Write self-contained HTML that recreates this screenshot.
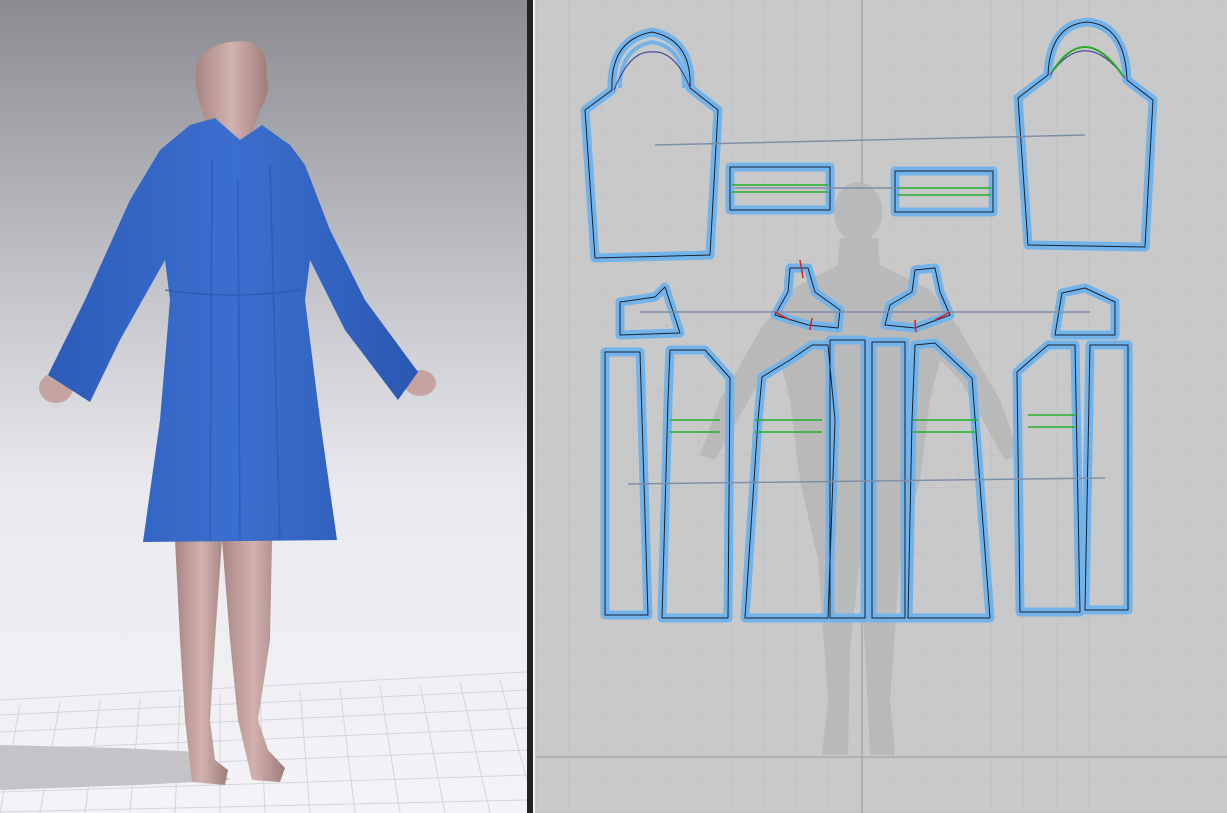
<!DOCTYPE html>
<html><head><style>
html,body{margin:0;padding:0;width:1227px;height:813px;overflow:hidden;background:#c8c8c8}
svg{display:block}
</style></head><body>
<svg width="1227" height="813" viewBox="0 0 1227 813" xmlns="http://www.w3.org/2000/svg">
<defs>
<linearGradient id="lg" x1="0" y1="0" x2="0" y2="1">
<stop offset="0" stop-color="#8b8c91"/>
<stop offset="0.35" stop-color="#c3c4c9"/>
<stop offset="0.6" stop-color="#e9e9ee"/>
<stop offset="1" stop-color="#f4f4f8"/>
</linearGradient>
<pattern id="grid" x="536" y="0" width="32.5" height="32.5" patternUnits="userSpaceOnUse">
<path d="M0 0H32.5M0 0V32.5" stroke="#c0c0c0" stroke-width="1" fill="none"/>
</pattern>
<linearGradient id="skin" x1="0" x2="1"><stop offset="0" stop-color="#a88583"/><stop offset="0.5" stop-color="#d2b2ae"/><stop offset="1" stop-color="#9e7c7a"/></linearGradient>
<linearGradient id="coat" x1="0" x2="1"><stop offset="0" stop-color="#2c5cb8"/><stop offset="0.5" stop-color="#3b6fcf"/><stop offset="1" stop-color="#2a58b2"/></linearGradient>
</defs>
<rect x="0" y="0" width="528" height="813" fill="url(#lg)"/>
<g stroke="#d4d4da" stroke-width="1">
<path d="M0 700L527 672M0 715L527 690M0 732L527 708M0 750L527 728M0 770L527 750M0 792L527 775M0 812L527 800"/>
<path d="M20 705L0 813M60 702L40 813M100 700L85 813M140 698L130 813M180 696L175 813M220 694L220 813M260 692L265 813M300 690L310 813M340 688L355 813M380 686L400 813M420 684L445 813M460 682L490 813M500 680L527 780"/>
</g>
<path d="M0 745L120 748L200 752L230 780L140 785L0 790Z" fill="#c4c4c8"/>
<path d="M175 540L222 540L215 640L210 720L215 760L228 770L225 785L192 782L185 720L180 640Z" fill="url(#skin)"/>
<path d="M222 540L272 540L270 640L258 720L268 750L285 768L280 782L252 780L238 720L230 640Z" fill="url(#skin)"/>
<path d="M198 60Q215 38 250 42Q270 50 266 75Q272 90 260 110L250 140L212 140L200 105Q192 80 198 60Z" fill="url(#skin)"/>
<ellipse cx="56" cy="388" rx="17" ry="15" fill="#c5a3a0"/>
<ellipse cx="420" cy="383" rx="16" ry="13" fill="#c5a3a0"/>
<path d="M190 125L215 118L240 140L262 125L290 145L305 165L330 230L365 300L418 372L398 400L345 330L310 260L305 300L320 420L337 540L143 542L160 420L170 300L165 260L120 340L90 402L48 375L85 300L130 200L160 150Z" fill="url(#coat)"/>
<g stroke="#2a56ad" stroke-width="1.5" fill="none" opacity="0.7">
<path d="M212 160L210 540M270 165L280 540M238 180L240 540M165 290Q230 300 300 290"/>
</g>
<rect x="527" y="0" width="6" height="813" fill="#222"/>
<rect x="533" y="0" width="2" height="813" fill="#f4f4f4"/>
<rect x="535" y="0" width="692" height="813" fill="#c9c9c9"/>
<rect x="535" y="0" width="692" height="813" fill="url(#grid)"/>
<path d="M862 0V813M535 757H1227" stroke="#aaaaaa" stroke-width="1.5"/>
<g fill="#b9b9b9">
<ellipse cx="858" cy="212" rx="24" ry="30"/>
<path d="M840 238L878 238L880 265L930 290L960 330L1000 400L1020 455L1005 460L960 380L940 360L930 400L920 480L900 560L890 700L895 755L870 755L865 650L860 560L850 650L848 755L822 755L828 700L818 560L800 480L790 400L780 360L760 380L715 460L700 455L720 400L760 330L790 290L838 265Z"/>
</g>
<g fill="none" stroke="#72b3ea" stroke-width="9" stroke-linejoin="round">
<path d="M612 90Q610 40 652 32Q692 40 690 88L718 110L710 255L595 258L585 110Z"/>
<path d="M620 88Q620 48 652 42Q685 48 684 88" stroke-width="4"/>
<rect x="730" y="167" width="100" height="43"/>
<rect x="895" y="171" width="98" height="41"/>
<path d="M1048 75Q1050 25 1087 22Q1125 25 1127 80L1153 100L1145 247L1028 245L1018 98Z"/>
<path d="M620 302L655 297L665 287L680 333L620 335Z"/>
<path d="M790 268L808 268L815 292L840 310L838 328L808 325L775 315L788 292Z"/>
<path d="M915 270L935 268L940 292L950 315L915 328L885 325L890 305L912 292Z"/>
<path d="M1062 293L1085 288L1115 302L1115 335L1055 335Z"/>
<path d="M605 352L640 352L648 615L605 615Z"/>
<path d="M670 350L705 350L730 378L728 618L662 618L668 400Z"/>
<path d="M762 377L790 360L812 345L828 345L835 420L828 618L745 618L758 420Z"/>
<path d="M830 340L865 340L865 618L830 618Z"/>
<path d="M872 342L905 342L905 618L872 618Z"/>
<path d="M915 345L935 343L972 378L990 618L908 618L912 420Z"/>
<path d="M1017 372L1048 345L1075 345L1080 612L1020 612Z"/>
<path d="M1090 345L1128 345L1128 610L1085 610Z"/>
</g>
<g fill="none" stroke="#1a2230" stroke-width="1" stroke-linejoin="round">
<path d="M612 90Q610 40 652 32Q692 40 690 88L718 110L710 255L595 258L585 110Z"/>
<rect x="730" y="167" width="100" height="43"/>
<rect x="895" y="171" width="98" height="41"/>
<path d="M1048 75Q1050 25 1087 22Q1125 25 1127 80L1153 100L1145 247L1028 245L1018 98Z"/>
<path d="M620 302L655 297L665 287L680 333L620 335Z"/>
<path d="M790 268L808 268L815 292L840 310L838 328L808 325L775 315L788 292Z"/>
<path d="M915 270L935 268L940 292L950 315L915 328L885 325L890 305L912 292Z"/>
<path d="M1062 293L1085 288L1115 302L1115 335L1055 335Z"/>
<path d="M605 352L640 352L648 615L605 615Z"/>
<path d="M670 350L705 350L730 378L728 618L662 618L668 400Z"/>
<path d="M762 377L790 360L812 345L828 345L835 420L828 618L745 618L758 420Z"/>
<path d="M830 340L865 340L865 618L830 618Z"/>
<path d="M872 342L905 342L905 618L872 618Z"/>
<path d="M915 345L935 343L972 378L990 618L908 618L912 420Z"/>
<path d="M1017 372L1048 345L1075 345L1080 612L1020 612Z"/>
<path d="M1090 345L1128 345L1128 610L1085 610Z"/>
</g>
<g fill="none" stroke-width="1.2">
<path d="M614 90Q630 50 652 52Q675 50 690 88" stroke="#4a4a9a"/>
<path d="M1050 75Q1085 25 1125 78" stroke="#4a4a9a"/>
<path d="M1052 72Q1085 20 1123 76" stroke="#2aa82a" stroke-width="2"/>
<path d="M732 185H828M732 192H828M897 188H991M897 195H991M670 420H720M670 432H720M755 420H822M755 432H822M913 420H978M913 432H978M1028 415H1075M1028 427H1075" stroke="#22b02a" stroke-width="1.5"/>
<path d="M655 145L1085 135M628 484L1105 478M640 312L1090 312M735 188H895" stroke="#7f8ea8" stroke-width="1.5"/>
<path d="M800 260L803 278M775 312L790 320M812 318L810 330M950 312L935 320M915 320L916 332" stroke="#e02020" stroke-width="1.5"/>
</g>
</svg>
</body></html>
